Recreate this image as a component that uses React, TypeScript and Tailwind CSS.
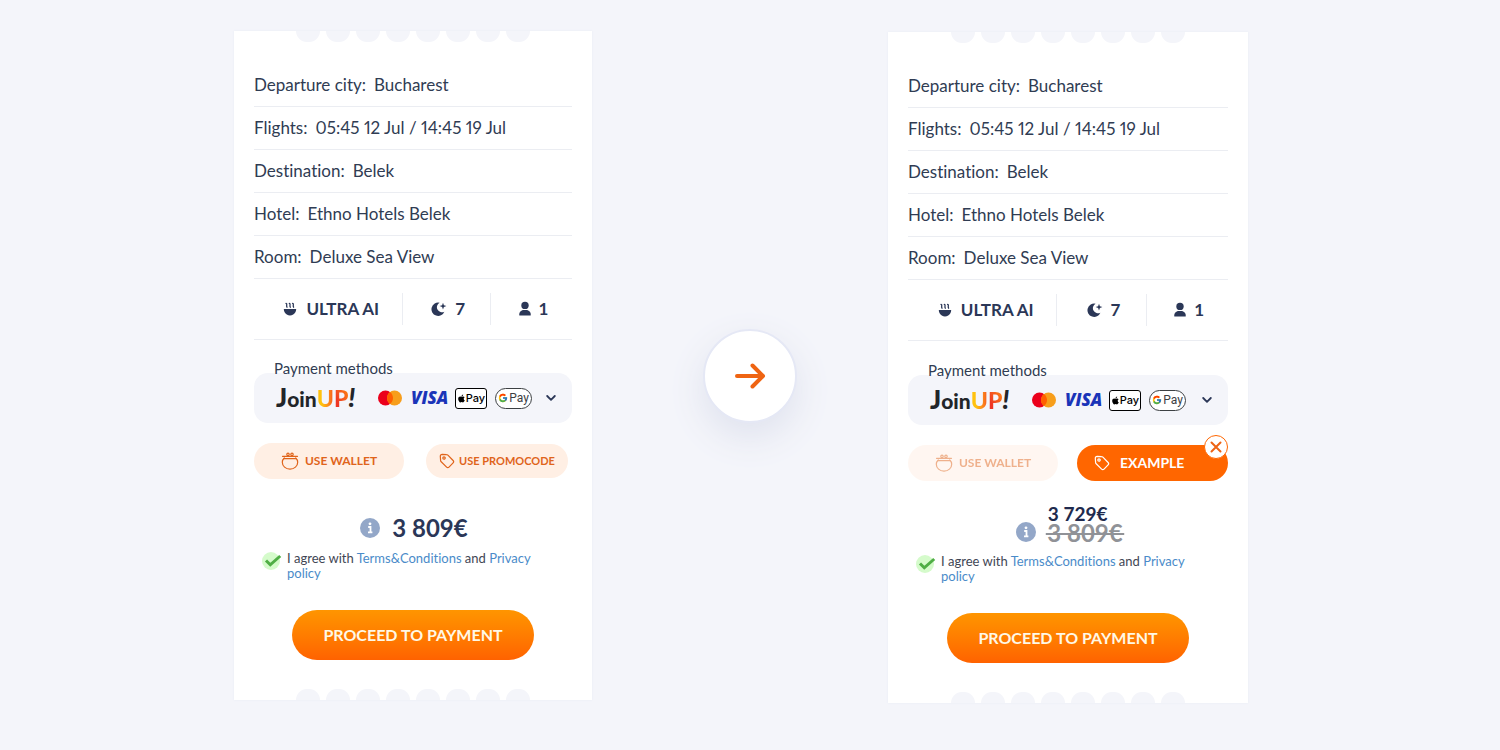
import { useId } from "react";
import { FaApple } from "react-icons/fa";
import { FcGoogle } from "react-icons/fc";

const trip = [
  ["Departure city:", "Bucharest"],
  ["Flights:", "05:45 12 Jul / 14:45 19 Jul"],
  ["Destination:", "Belek"],
  ["Hotel:", "Ethno Hotels Belek"],
  ["Room:", "Deluxe Sea View"],
];

function BowlIcon() {
  return (
    <svg className="size-4" viewBox="0 0 16 16" fill="none" aria-hidden="true">
      <path d="M1.800 8h12.400c0 2.600-1.200 4.200-3 5.400-2 1.300-4.400 1.300-6.400 0-1.800-1.200-3-2.800-3-5.400z" fill="#2b3757" />
      <path d="M4 2.400c2 .6-.3 2 1 3.800M7.300 2.400c2 .6-.3 2 1 3.800M10.600 2.400c2 .6-.3 2 1 3.800" stroke="#2b3757" strokeWidth="1.300" strokeLinecap="round" />
    </svg>
  );
}

function MoonIcon() {
  return (
    <svg className="size-4" viewBox="0 0 16 16" fill="#2b3757" aria-hidden="true">
      <path d="M8.600 1.700A4.300 4.300 0 1 0 13.400 10.700 6.700 6.700 0 1 1 8.600 1.700z" />
      <path d="M12 1.800l.9 2.400 2.500.9-2.500.9-.9 2.500-.9-2.500-2.500-.9 2.500-.9z" />
    </svg>
  );
}

function PersonIcon() {
  return (
    <svg className="h-4 w-3" viewBox="0 0 12 16" fill="#2b3757" aria-hidden="true">
      <circle cx="6" cy="4.400" r="3.700" />
      <path d="M.3 14.500v-1.300C.3 10.800 2.500 9 5 9h2c2.500 0 4.700 1.800 4.700 4.200v1.300z" />
    </svg>
  );
}

function PurseIcon() {
  return (
    <svg className="size-[18px]" viewBox="0 0 18 18" fill="none" stroke="currentColor" strokeWidth="1.200" strokeLinecap="round" aria-hidden="true">
      <path d="M3.300 6C1.900 7.200 1.300 8.700 1.300 10.200c0 3.900 3.400 6.900 7.700 6.900s7.700-3 7.700-6.900c0-1.500-.6-3-2-4.200" />
      <path d="M1.500 4.300h15M3 6.600h12" />
      <circle cx="7" cy="2.400" r="1.200" />
      <circle cx="11" cy="2.400" r="1.200" />
    </svg>
  );
}

function TagIcon() {
  return (
    <svg className="size-4" viewBox="0 0 16 16" fill="none" stroke="currentColor" strokeWidth="1.200" strokeLinejoin="round" aria-hidden="true">
      <path d="M1.300 3.200C1.300 2 2 1.300 3.200 1.300l4.300.3c.6 0 1 .2 1.400.6l5.200 5.300c.8.800.8 1.600 0 2.400L10 14.100c-.8.800-1.600.8-2.400 0L2.200 8.800c-.4-.4-.6-.8-.6-1.400z" />
      <circle cx="5" cy="5" r="1.200" />
    </svg>
  );
}

function InfoIcon() {
  return (
    <svg className="size-5" viewBox="0 0 20 20" aria-hidden="true">
      <circle cx="10" cy="10" r="10" fill="#93a7c8" />
      <circle cx="10" cy="5.800" r="1.400" fill="#fff" />
      <path d="M8.200 9h2.300v5M8 14.300h4.400" fill="none" stroke="#fff" strokeWidth="1.800" />
    </svg>
  );
}

function Notches({ bottom = false }: { bottom?: boolean }) {
  return (
    <div className="flex justify-center gap-1.5" aria-hidden="true">
      {Array.from({ length: 8 }, (_, i) => (
        <span key={i} className={bottom ? "h-[11px] w-6 rounded-t-full bg-[#f4f5fa]" : "h-[11px] w-6 rounded-b-full bg-[#f4f5fa]"} />
      ))}
    </div>
  );
}

function PaymentMethods() {
  const id = useId();
  return (
    <div>
      <div id={id} className="relative -mb-1 pl-5 text-[15px] leading-[18px]">Payment methods</div>
      <button type="button" aria-labelledby={id} aria-haspopup="listbox" className="flex h-[50px] w-full items-center rounded-[14px] bg-[#f4f5fa] pr-4 pl-[22px]">
        <span className="mr-6 flex w-[78px] items-baseline text-[21px] leading-7 font-black text-[#222529]">
          <span className="text-[26px]">J</span>oin
          <span className="bg-linear-to-r from-[#ffc20e] from-30% to-[#f4511e] bg-clip-text text-[23px] text-transparent">U</span>
          <span className="bg-linear-to-tr from-[#ee3524] from-30% to-[#ff8a00] bg-clip-text text-[23px] text-transparent">P</span>
          <span className="text-[26px] italic">!</span>
        </span>
        <svg className="mr-[9px] h-4 w-6" viewBox="0 0 24 16" role="img" aria-label="Mastercard">
          <circle cx="7.500" cy="8" r="7.500" fill="#eb001b" />
          <circle cx="16.500" cy="8" r="7.500" fill="#f79e1b" />
          <path d="M12 2a7.500 7.500 0 0 1 0 12 7.500 7.500 0 0 1 0-12z" fill="#ff5f00" />
        </svg>
        <span className="mr-2 w-9 font-['Open_Sans',sans-serif] text-[17px] leading-5 font-extrabold text-[#1a34b8] italic">VISA</span>
        <span className="mr-2 flex h-[21px] w-8 items-center justify-center rounded-[3px] border border-black bg-white font-['Inter',sans-serif] text-[11px] leading-3 font-medium text-black">
          <FaApple className="size-[9px]" />
          Pay
        </span>
        <span className="flex h-[21px] w-[37px] items-center justify-center gap-px rounded-full border border-[#3c4043] bg-white font-['Roboto',sans-serif] text-[12px] leading-3 text-[#3c4043]">
          <FcGoogle className="size-[10px]" />
          Pay
        </span>
        <svg className="ml-auto h-2 w-2.5" viewBox="0 0 10 8" fill="none" stroke="#2b3757" strokeWidth="1.800" strokeLinecap="round" strokeLinejoin="round" aria-hidden="true">
          <path d="M1.200 2l3.800 3.800L8.800 2" />
        </svg>
      </button>
    </div>
  );
}

function Ticket({ promo = false }: { promo?: boolean }) {
  const agree = useId();
  return (
    <section className={promo ? "w-full max-w-[360px] bg-white shadow-[0_0_2px_#e9ecf5]" : "w-full max-w-[358px] bg-white shadow-[0_0_2px_#e9ecf5]"}>
      <Notches />
      <div className="px-5 pt-[22px] pb-[29px]">
        <dl>
          {trip.map(([name, value]) => (
            <div key={name} className="flex h-[43px] items-center gap-2 border-b border-[#ebedf2] text-[17px] leading-5 proportional-nums">
              <dt>{name}</dt>
              <dd>{value}</dd>
            </div>
          ))}
        </dl>
        <div className="flex h-[61px] items-center border-b border-[#ebedf2] text-[17px] leading-8 font-bold text-[#2b3757]">
          <div className="flex flex-[149] items-center justify-center gap-2 pl-1.5"><BowlIcon />ULTRA AI</div>
          <div className="flex flex-[88] items-center justify-center gap-2 border-l border-[#ebedf2] pl-1"><MoonIcon />7</div>
          <div className="flex flex-[81] items-center justify-center gap-2 border-l border-[#ebedf2] pl-1"><PersonIcon />1</div>
        </div>

        <div className={promo ? "pt-5" : "pt-[19px]"}>
          <PaymentMethods />
        </div>

        <div className="mt-5 flex h-9 items-center justify-between">
          <button type="button" disabled={promo} className="flex h-9 w-[150px] items-center justify-center gap-1.5 rounded-full bg-[#ffefe4] text-[12px] leading-4 font-bold text-[#e0641b] disabled:opacity-50">
            <PurseIcon />USE WALLET
          </button>
          {promo ? (
            <div className="relative">
              <button type="button" className="flex h-9 w-[151px] items-center gap-2.5 rounded-full bg-[#ff6600] pl-[17px] text-[14px] leading-4 font-bold text-white">
                <TagIcon />EXAMPLE
              </button>
              <button type="button" aria-label="Remove promocode" className="absolute -top-2.5 right-0 flex size-6 items-center justify-center rounded-full border border-[#ff6600] bg-white">
                <svg className="size-3" viewBox="0 0 12 12" stroke="#ee6314" strokeWidth="2" strokeLinecap="round" aria-hidden="true">
                  <path d="M1.500 1.500l9 9M10.500 1.500l-9 9" />
                </svg>
              </button>
            </div>
          ) : (
            <button type="button" className="mr-1 flex h-[34px] w-[142px] items-center justify-center gap-1 rounded-full bg-[#ffefe4] text-[11px] leading-4 font-bold text-[#e0641b]">
              <TagIcon />USE PROMOCODE
            </button>
          )}
        </div>

        {promo ? (
          <div className="flex items-end justify-center gap-2.5 pt-[23px] pb-3 pl-1 font-bold">
            <InfoIcon />
            <div>
              <div className="pl-0.5 text-[19px] leading-5 text-[#202a4d]">3 729€</div>
              <del className="block text-[24px] leading-[18px] text-[#909297]">{"\u200a3 809€\u200a"}</del>
            </div>
          </div>
        ) : (
          <div className="flex items-center justify-center gap-3 pt-[35px] pb-[9px] pl-0.5 text-[24px] leading-7 font-bold text-[#2b3757]">
            <InfoIcon />3 809€
          </div>
        )}

        <div className="flex gap-1 pl-2 text-[13px] leading-[15px] text-[#414654]">
          <span className="relative flex h-5 w-[21px] shrink-0 items-center">
            <input id={agree} type="checkbox" defaultChecked className="peer size-[18px] appearance-none rounded-full bg-[#d5fbcb]" />
            <svg className="pointer-events-none absolute inset-0 hidden h-5 w-5 peer-checked:block" viewBox="0 0 20 20" fill="none" stroke="#4fae45" strokeWidth="3" aria-hidden="true">
              <path d="M4 9.500l4.300 4.300L18.200 5" />
            </svg>
          </span>
          <p className="max-w-[260px]">
            <label htmlFor={agree}>I agree with</label>{" "}
            <a href="#terms" className="text-[#4a8bc9]">Terms&amp;Conditions</a> and{" "}
            <a href="#privacy" className="text-[#4a8bc9]">Privacy policy</a>
          </p>
        </div>

        <button type="button" className="mx-auto mt-[29px] block h-[50px] w-[242px] rounded-full bg-linear-to-b from-[#ff9500] to-[#ff6200] text-[16px] leading-5 font-bold text-[#fff8e6]">
          PROCEED TO PAYMENT
        </button>
      </div>
      <Notches bottom />
    </section>
  );
}

export default function App() {
  return (
    <main className="flex min-h-screen items-start justify-center bg-[#f4f5fa] py-8 pr-5 font-['Lato',sans-serif] text-[#303c53] [font-feature-settings:'liga'_0]">
      <div className="-mt-px flex flex-1 justify-end"><Ticket /></div>
      <div className="mt-0.5 mr-[91px] ml-[111px] flex size-[94px] shrink-0 items-center justify-center self-center rounded-full border-2 border-[#e5e8f5] bg-white shadow-[0_14px_36px_#dfe2ee]">
        <svg className="h-7 w-8" viewBox="0 0 32 28" fill="none" stroke="#ef6412" strokeWidth="4" strokeLinecap="round" strokeLinejoin="round" role="img" aria-label="Becomes">
          <path d="M3 14h26M18.500 3.500L29 14 18.500 24.500" />
        </svg>
      </div>
      <div className="flex flex-1"><Ticket promo /></div>
    </main>
  );
}
